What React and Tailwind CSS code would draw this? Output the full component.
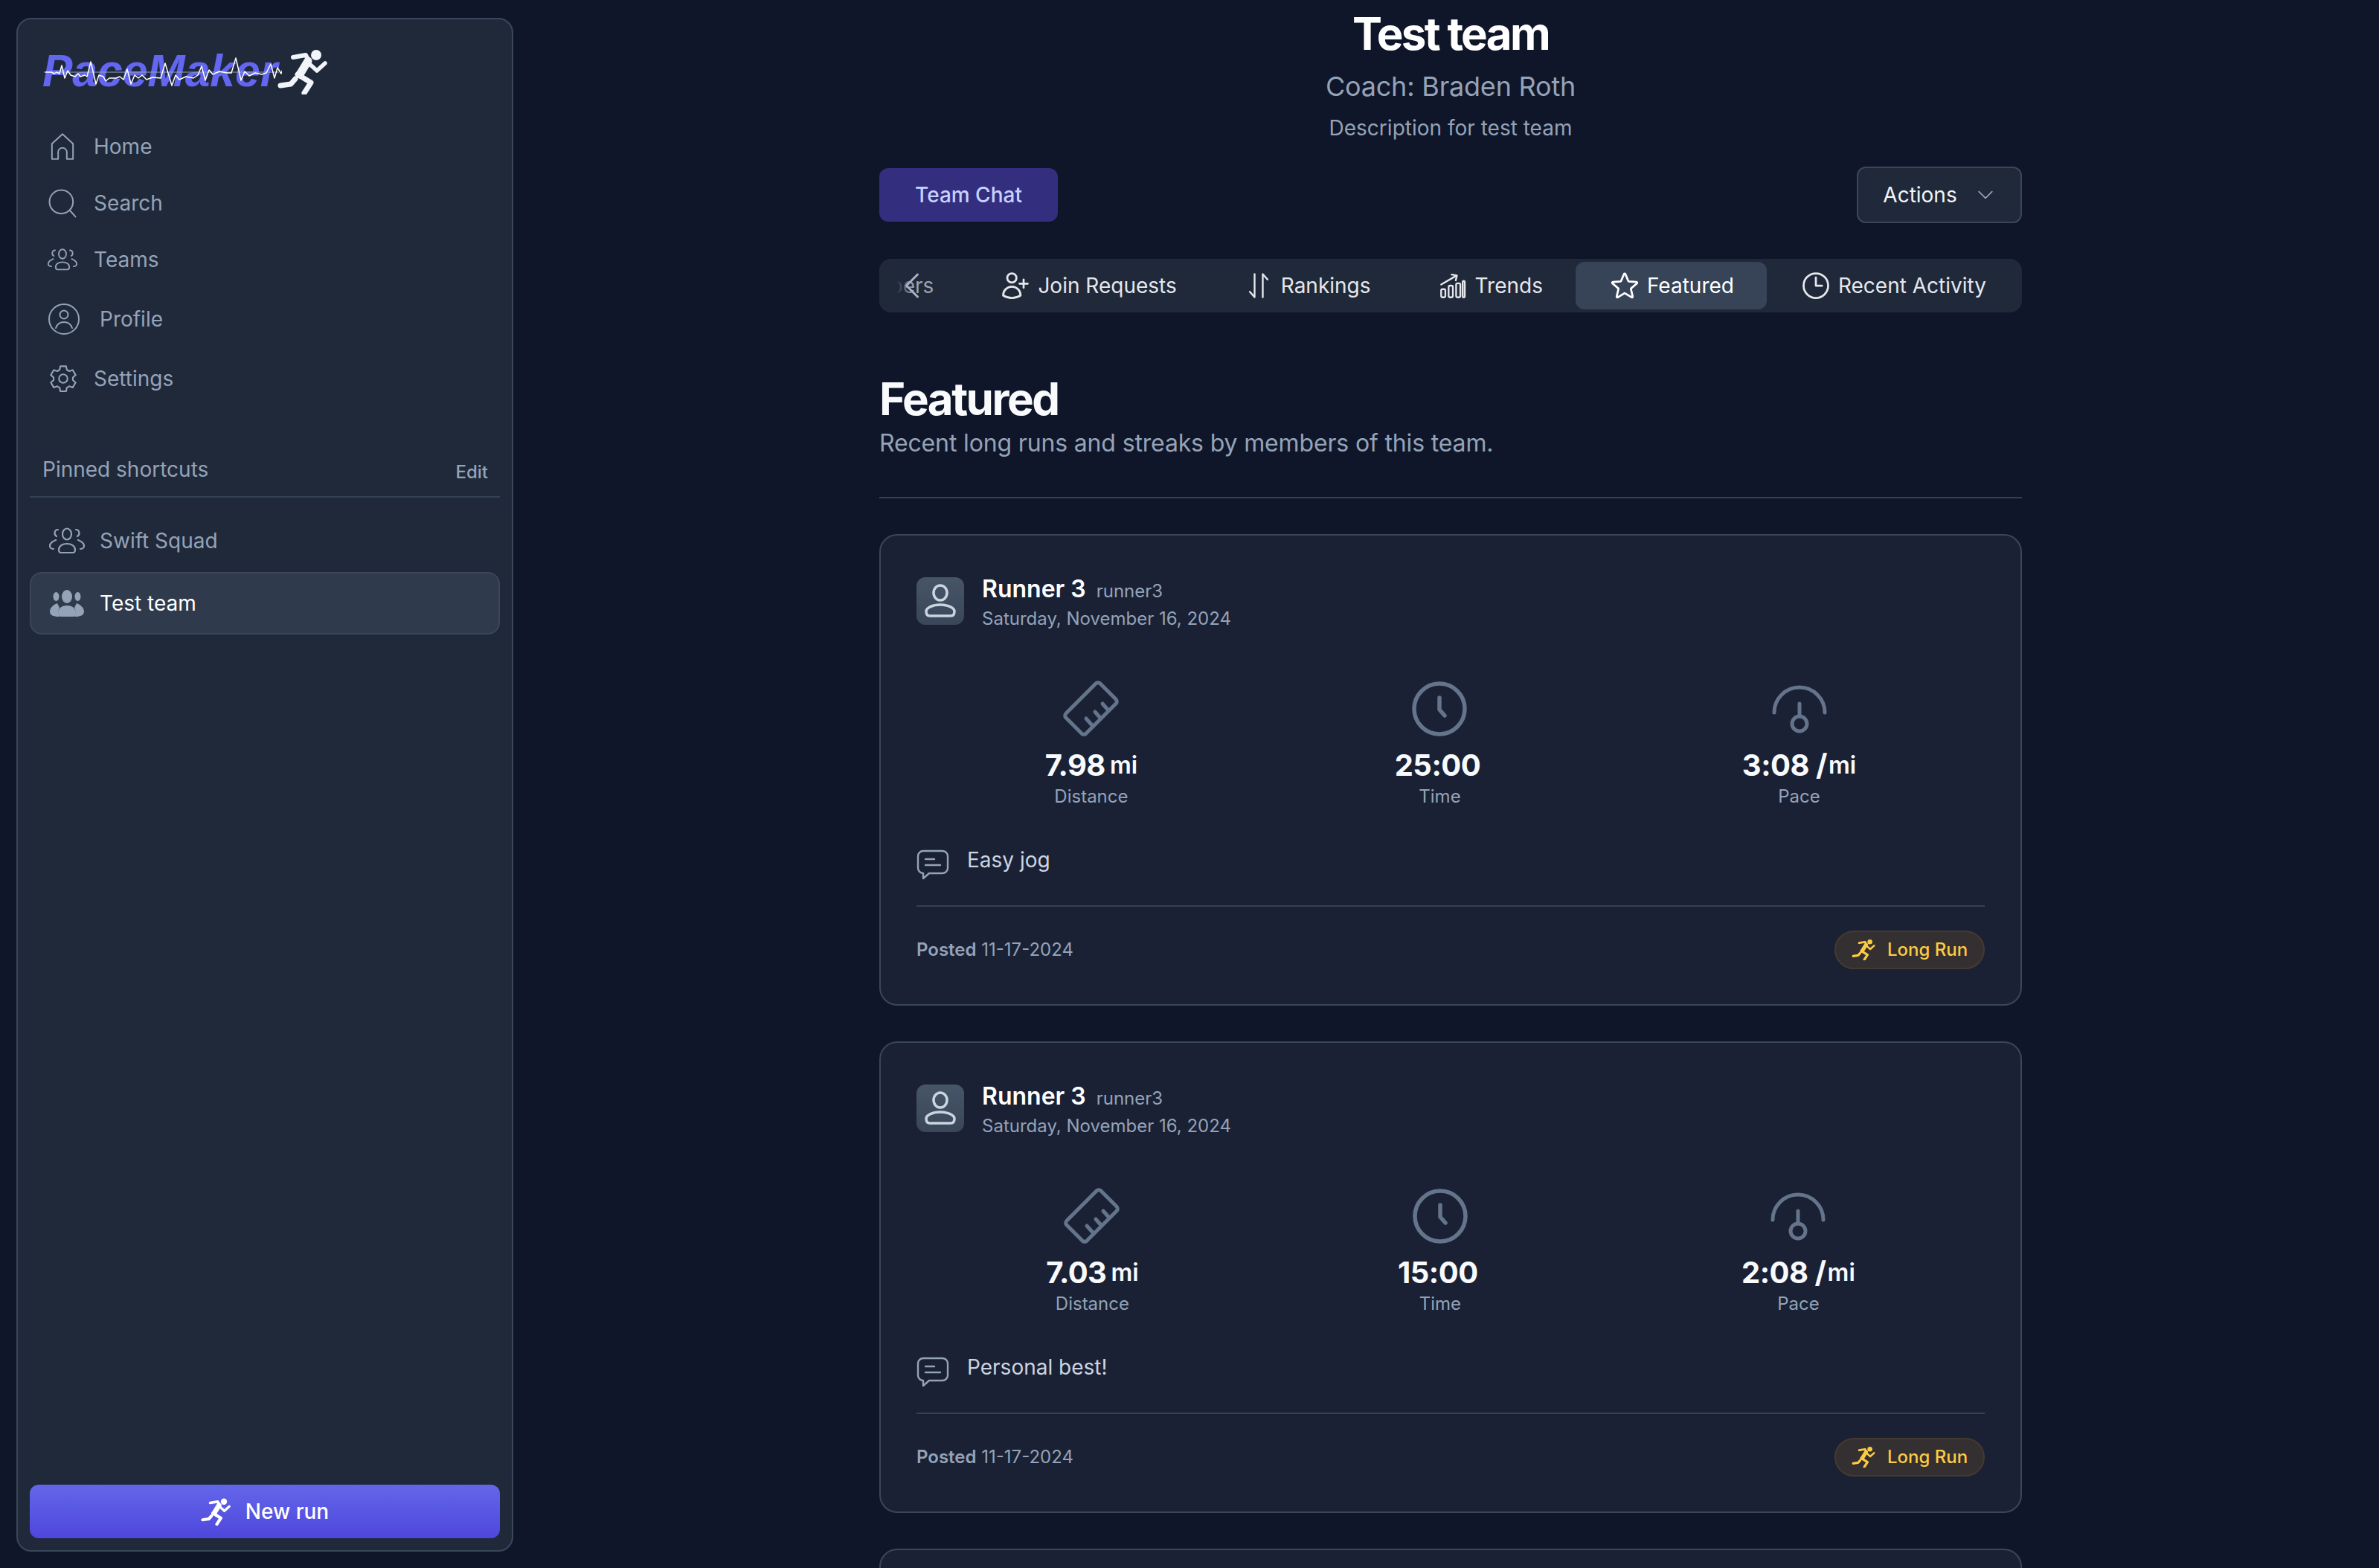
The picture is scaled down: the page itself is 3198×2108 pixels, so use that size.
import React from 'react'
import { HiOutlineUserPlus, HiOutlineStar, HiOutlineClock, HiOutlineChevronDown, HiOutlineChevronLeft } from 'react-icons/hi2'

function Runner({ className }) {
  return (
    <svg viewBox="0 0 67 60" className={className} fill="none" stroke="currentColor" strokeLinecap="round" strokeLinejoin="round">
      <circle cx="52" cy="7" r="7" fill="currentColor" stroke="none" />
      <path d="M21 10l17-3 4 8" strokeWidth="6" />
      <path d="M41 15l-11 18" strokeWidth="11" />
      <path d="M42 18l11 10 11-10" strokeWidth="5.5" />
      <path d="M27 33l18 11-9 14" strokeWidth="7" />
      <path d="M24 39l-6 7-14 2" strokeWidth="7" />
    </svg>
  )
}

function HomeIcon({ className }) {
  return (
    <svg viewBox="0 0 24 24" className={className} fill="none" stroke="currentColor" strokeWidth="1.2" strokeLinejoin="round">
      <path d="M3.500 22V9.800L12 2l8.500 7.800V22h-5v-5.500a3.500 3.500 0 0 0-7 0V22z" />
    </svg>
  )
}

function SearchIcon({ className }) {
  return (
    <svg viewBox="0 0 24 24" className={className} fill="none" stroke="currentColor" strokeWidth="1.2" strokeLinecap="round">
      <circle cx="11" cy="11" r="9.500" />
      <path d="M18 18l4.500 5" />
    </svg>
  )
}

function GroupIcon({ className, solid }) {
  if (solid) {
    return (
      <svg viewBox="0 0 48 36" className={className} fill="currentColor">
        <ellipse cx="24" cy="9" rx="7" ry="9" />
        <ellipse cx="9.500" cy="9" rx="4" ry="6" />
        <ellipse cx="38.500" cy="9" rx="4" ry="6" />
        <path d="M12 36c-6 0-11-2-11-7 0-5 5-9 10-11l3 6c-2 3-2 8 0 12z" />
        <path d="M36 36c6 0 11-2 11-7 0-5-5-9-10-11l-3 6c2 3 2 8 0 12z" />
        <path d="M12 31c0-6 5-10 12-10s12 4 12 10c0 3-2 5-4 5H16c-2 0-4-2-4-5z" />
      </svg>
    )
  }
  return (
    <svg viewBox="0 0 48 36" className={className} fill="none" stroke="currentColor" strokeWidth="2.200" strokeLinecap="round">
      <ellipse cx="24" cy="9" rx="6" ry="7.500" />
      <path d="M13 30c0-5 5-8 11-8s11 3 11 8c0 2-1 4-3 4H16c-2 0-3-2-3-4z" />
      <path d="M12 3c-5 0-6 7-2 9" />
      <path d="M36 3c5 0 6 7 2 9" />
      <path d="M9 17c-5 2-8 5-8 8 0 2 2 4 5 4" />
      <path d="M39 17c5 2 8 5 8 8 0 2-2 4-5 4" />
    </svg>
  )
}

function ProfileIcon({ className }) {
  return (
    <svg viewBox="0 0 42 42" className={className} fill="none" stroke="currentColor" strokeWidth="2" strokeLinecap="round">
      <circle cx="21" cy="21" r="20" />
      <circle cx="21" cy="15" r="5.500" />
      <path d="M10 33c2-6 6-8 11-8s9 2 11 8" />
    </svg>
  )
}

function GearIcon({ className }) {
  return (
    <svg viewBox="0 0 24 24" className={className} fill="none" stroke="currentColor" strokeWidth="1.200" strokeLinejoin="round">
      <path d="M9.800 2.500h4.400l.6 2.800 1.800 1 2.700-.9 2.200 3.800-2.100 1.900v2l2.100 1.900-2.200 3.800-2.700-.9-1.800 1-.6 2.800H9.800l-.6-2.800-1.800-1-2.700.9-2.200-3.800 2.100-1.900v-2L2.500 9.200l2.200-3.800 2.700.9 1.800-1z" />
      <circle cx="12" cy="12" r="3.300" />
    </svg>
  )
}

function SortIcon({ className }) {
  return (
    <svg viewBox="0 0 24 24" className={className} fill="none" stroke="currentColor" strokeWidth="1.300" strokeLinecap="round" strokeLinejoin="round">
      <path d="M9 3.500v17l-3.500-4" />
      <path d="M15 20.500v-17l3.500 4" />
    </svg>
  )
}

function TrendIcon({ className }) {
  return (
    <svg viewBox="-2 -2 28 28" className={className} fill="none" stroke="currentColor" strokeWidth="1.500" strokeLinecap="round" strokeLinejoin="round">
      <path d="M2 11l13-7.500" />
      <path d="M11 2.500l4.500.8-1 4.200" />
      <rect x="2" y="15" width="3.600" height="7" rx="1.200" />
      <rect x="8.400" y="12" width="3.600" height="10" rx="1.200" />
      <rect x="14.800" y="10" width="3.600" height="12" rx="1.200" />
      <rect x="20.400" y="8" width="1.800" height="14" rx=".9" />
    </svg>
  )
}

function RulerIcon({ className }) {
  return (
    <svg viewBox="0 0 80 80" className={className} fill="none" stroke="currentColor" strokeWidth="5" strokeLinecap="round" strokeLinejoin="round">
      <path d="M46 6a4 4 0 0 1 6 0l21 21a4 4 0 0 1 0 6L33 73a4 4 0 0 1-6 0L6 52a4 4 0 0 1 0-6z" />
      <path d="M63 42l-8-9" />
      <path d="M52 52l-7-8" />
      <path d="M41 62l-8-9" />
    </svg>
  )
}

function ClockIcon({ className }) {
  return (
    <svg viewBox="0 0 80 80" className={className} fill="none" stroke="currentColor" strokeWidth="5.500" strokeLinecap="round" strokeLinejoin="round">
      <circle cx="40" cy="40" r="34" />
      <path d="M40 25v16l7 8" />
    </svg>
  )
}

function GaugeIcon({ className }) {
  return (
    <svg viewBox="0 0 80 80" className={className} fill="none" stroke="currentColor" strokeWidth="5" strokeLinecap="round" strokeLinejoin="round">
      <path d="M6 45a34 34 0 0 1 68 0" />
      <path d="M40 33v17" />
      <circle cx="40" cy="60" r="10" />
    </svg>
  )
}

function ChatIcon({ className }) {
  return (
    <svg viewBox="0 0 44 44" className={className} fill="none" stroke="currentColor" strokeWidth="2.400" strokeLinecap="round" strokeLinejoin="round">
      <path d="M9 4h26a7 7 0 0 1 7 7v16a7 7 0 0 1-7 7H17l-8 7v-7a7 7 0 0 1-7-7V11a7 7 0 0 1 7-7z" />
      <path d="M12 15h12" />
      <path d="M12 23h20" />
    </svg>
  )
}

function AvatarIcon() {
  return (
    <svg viewBox="0 0 64 64" className="w-[64px] h-[64px]" fill="none" stroke="#cbd5e1" strokeWidth="3.500">
      <ellipse cx="32" cy="21" rx="9" ry="10" />
      <path d="M13 46c0-5 9-9 19-9s19 4 19 9c0 4-2 6-5 6H18c-3 0-5-2-5-6z" />
    </svg>
  )
}

const ecg = 'M2 25h8l4 2 3-2 4 2 3-11 4 17 4-10 4 6 6 2 4-4 3 4 6-2 3 2 5-20 7 30 4-12 6 2 3 6 5-4 9 0 5-2 5 4 5-14 5 20 5-12 5 4 5-4 6 6 8-3 11 1 6-20 9 30 5-14 5 6 9-4 10 2 6-4 5-12 5 19 5-14 5 6 9-4 10 2 6 0 6-20 7 30 5-12 6 6 8-4 9 2 6-2 6-12 5 19 4-14 5 8 2-6 8 0'

function Logo() {
  return (
    <div className="relative flex items-center h-[60px] w-[386px] ml-[33px] mt-[43px]">
      <span className="text-[60.500px] leading-none font-bold italic text-[#6366f1] font-['Liberation_Sans',Arial,sans-serif] mt-[-8px]">PaceMaker</span>
      <svg viewBox="0 0 320 50" className="absolute left-[2px] top-[3px] w-[320px] h-[50px]" fill="none">
        <path d="M0 25h316" stroke="#94a3b8" strokeWidth="1" />
        <path d={ecg} stroke="#ffffff" strokeWidth="1.500" strokeLinejoin="round" />
      </svg>
      <Runner className="absolute left-[316px] top-[-2px] w-[67px] h-[60px] text-[#f1f5f9]" />
    </div>
  )
}

function NavRow({ icon, label, h, gap }) {
  return (
    <div className={`flex items-center text-[28px] text-[#94a3b8] pl-[40px] ${h} ${gap}`}>
      {icon}
      <span>{label}</span>
    </div>
  )
}

function Sidebar() {
  return (
    <div className="w-[702px] shrink-0 pl-[22px] pt-[24px] pb-[22px]">
      <aside className="h-full w-[668px] flex flex-col rounded-[20px] border-2 border-[#3a475a] bg-[#20293a]">
        <Logo />
        <nav className="mt-[30px] flex flex-col">
          <NavRow h="h-[76px]" gap="gap-[22px]" label="Home" icon={<HomeIcon className="w-[40px] h-[40px]" />} />
          <NavRow h="h-[76px]" gap="gap-[22px]" label="Search" icon={<SearchIcon className="w-[40px] h-[40px]" />} />
          <NavRow h="h-[76px]" gap="gap-[22px]" label="Teams" icon={<GroupIcon className="w-[40px] h-[36px]" />} />
          <NavRow h="h-[84px]" gap="gap-[26px]" label="Profile" icon={<ProfileIcon className="w-[44px] h-[42px]" />} />
          <NavRow h="h-[76px]" gap="gap-[20px]" label="Settings" icon={<GearIcon className="w-[42px] h-[42px]" />} />
        </nav>
        <div className="mx-[16px] mt-[66px] h-[56px] flex items-start justify-between border-b-2 border-[#334155] pl-[17px] pr-[16px]">
          <span className="text-[28px] leading-[36px] text-[#94a3b8]">Pinned shortcuts</span>
          <span className="text-[24px] leading-[36px] mt-[4px] font-medium text-[#94a3b8]">Edit</span>
        </div>
        <div className="mx-[16px] mt-[22px] flex flex-col gap-[6px]">
          <div className="h-[72px] flex items-center gap-[20px] pl-[26px] text-[28px] text-[#94a3b8]">
            <GroupIcon className="w-[48px] h-[36px]" />
            <span>Swift Squad</span>
          </div>
          <div className="h-[84px] flex items-center gap-[20px] pl-[24px] text-[28px] text-white rounded-[16px] border-2 border-[#3b4759] bg-[#2f3a4d]">
            <GroupIcon solid className="w-[48px] h-[36px] text-[#94a3b8]" />
            <span>Test team</span>
          </div>
        </div>
        <button className="mt-auto mx-[16px] mb-[16px] h-[72px] shrink-0 rounded-[12px] bg-gradient-to-b from-[#6366ea] to-[#4f46dc] text-white text-[28px] font-medium flex items-center justify-center gap-[20px]">
          <Runner className="w-[40px] h-[37px]" />
          New run
        </button>
      </aside>
    </div>
  )
}

function Tab({ icon, label, active, dim }) {
  return (
    <div className={`h-[64px] px-[44px] flex items-center gap-[8px] text-[28px] shrink-0 rounded-[12px] whitespace-nowrap ${active ? 'bg-[#374357] text-white' : dim ? 'text-[#9ca3af]' : 'text-[#e5e7eb]'}`}>
      {icon}
      {label}
    </div>
  )
}

function Tabs() {
  return (
    <div className="relative shrink-0 mt-[48px] h-[72px] rounded-[16px] bg-[#20293a] flex items-center justify-end overflow-hidden pr-[4px]">
      <Tab dim label="Members" />
      <Tab label="Join Requests" icon={<HiOutlineUserPlus className="w-[44px] h-[44px]" />} />
      <Tab label="Rankings" icon={<SortIcon className="w-[44px] h-[44px]" />} />
      <Tab label="Trends" icon={<TrendIcon className="w-[44px] h-[44px]" />} />
      <Tab label="Featured" active icon={<HiOutlineStar className="w-[44px] h-[44px]" />} />
      <Tab label="Recent Activity" icon={<HiOutlineClock className="w-[44px] h-[44px]" />} />
      <div className="absolute left-0 top-0 h-[72px] w-[46px] bg-gradient-to-r from-[#20293a] via-[#20293a] to-transparent flex items-center pl-[20px]">
        <HiOutlineChevronLeft className="w-[48px] h-[48px] text-[#a8b3c4] shrink-0" />
      </div>
    </div>
  )
}

function Stat({ icon, value, unit, label, tight }) {
  return (
    <div className="flex flex-col items-center">
      {icon}
      <div className={`mt-[6px] h-[60px] flex items-center text-[40px] font-bold tracking-[-0.500px] text-[#f8fafc] whitespace-nowrap ${tight ? 'gap-[2px]' : 'gap-[6px]'}`}>
        {value}
        <span className="text-[32px] font-semibold tracking-normal">{unit}</span>
      </div>
      <div className="text-[24px] leading-[36px] text-[#94a3b8] mt-[-6px]">{label}</div>
    </div>
  )
}

function RunCard({ distance, time, pace, note }) {
  return (
    <div className="h-[634px] shrink-0 rounded-[24px] border-2 border-[#3a465a] bg-[#1a2135] px-[48px] pt-[56px]">
      <div className="flex gap-[24px]">
        <div className="w-[64px] h-[64px] rounded-[12px] bg-gradient-to-b from-[#475569] to-[#3a4659]">
          <AvatarIcon />
        </div>
        <div>
          <div className="flex items-baseline gap-[14px] h-[36px] mt-[-2px]">
            <span className="text-[32px] leading-[36px] font-semibold text-white">Runner 3</span>
            <span className="text-[24px] text-[#94a3b8]">runner3</span>
          </div>
          <div className="text-[24px] leading-[36px] text-[#94a3b8] mt-[4px]">Saturday, November 16, 2024</div>
        </div>
      </div>
      <div className="mt-[63px] flex justify-around">
        <Stat value={distance} unit="mi" label="Distance" icon={<RulerIcon className="w-[80px] h-[80px] text-[#64748b]" />} />
        <Stat value={time} label="Time" icon={<ClockIcon className="w-[80px] h-[80px] text-[#64748b]" />} />
        <Stat tight value={`${pace} /`} unit="mi" label="Pace" icon={<GaugeIcon className="w-[80px] h-[80px] text-[#64748b]" />} />
      </div>
      <div className="mt-[47px] flex items-start gap-[24px] h-[56px] text-[28px] text-[#cbd5e1]">
        <ChatIcon className="w-[44px] h-[44px] mt-[4px] text-[#94a3b8]" />
        <span className="leading-[40px]">{note}</span>
      </div>
      <div className="mt-[25px] border-t-2 border-[#334155] pt-[32px] flex items-center justify-between">
        <div className="text-[24px] text-[#94a3b8]">
          <span className="font-semibold">Posted</span> 11-17-2024
        </div>
        <div className="h-[52px] w-[202px] rounded-full border-2 border-[#453a2e] bg-[#342f30] text-[#facc44] text-[24px] font-medium flex items-center justify-center gap-[16px]">
          <Runner className="w-[32px] h-[28px]" />
          Long Run
        </div>
      </div>
    </div>
  )
}

export default function App() {
  return (
    <div className="h-screen w-full overflow-hidden flex bg-[#101629] font-['Inter',sans-serif]">
      <Sidebar />
      <main className="flex-1 flex justify-center h-full overflow-hidden">
        <div className="w-[1536px] flex flex-col">
          <div className="text-center shrink-0">
            <h1 className="text-[60px] leading-[90px] font-bold tracking-[-2.700px] text-white">Test team</h1>
            <p className="text-[36px] leading-[52px] tracking-[-0.200px] text-[#94a3b8]">Coach: Braden Roth</p>
            <p className="text-[28px] leading-[40px] mt-[10px] text-[#94a3b8]">Description for test team</p>
          </div>
          <div className="shrink-0 mt-[32px] flex items-center justify-between">
            <button className="w-[240px] h-[72px] rounded-[12px] bg-[#332e7e] text-[#c7d2fe] text-[28px] font-medium">Team Chat</button>
            <button className="w-[222px] h-[76px] rounded-[12px] border-2 border-[#3a475a] bg-[#20293a] text-[#f1f5f9] text-[28px] flex items-center justify-center gap-[24px]">
              Actions
              <HiOutlineChevronDown className="w-[28px] h-[28px] text-[#94a3b8]" />
            </button>
          </div>
          <Tabs />
          <div className="shrink-0 mt-[80px] pb-[48px] border-b-2 border-[#334155]">
            <h2 className="text-[60px] leading-[72px] font-bold tracking-[-2.500px] text-[#f8fafc]">Featured</h2>
            <p className="text-[32px] leading-[48px] tracking-[-0.150px] text-[#94a3b8]">Recent long runs and streaks by members of this team.</p>
          </div>
          <div className="mt-[48px] flex flex-col gap-[48px]">
            <RunCard distance="7.98" time="25:00" pace="3:08" note="Easy jog" />
            <RunCard distance="7.03" time="15:00" pace="2:08" note="Personal best!" />
            <RunCard distance="7.03" time="15:00" pace="2:08" note="Personal best!" />
          </div>
        </div>
      </main>
    </div>
  )
}
